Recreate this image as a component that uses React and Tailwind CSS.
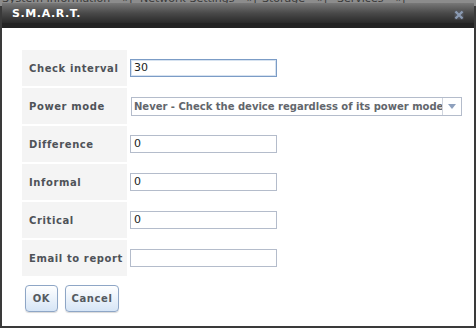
export default function App() {
  const rows = [
    { label: 'Check interval', value: '30', focus: true },
    { label: 'Power mode', select: 'Never - Check the device regardless of its power mode' },
    { label: 'Difference', value: '0' },
    { label: 'Informal', value: '0' },
    { label: 'Critical', value: '0' },
    { label: 'Email to report', value: '' },
  ];

  const tabs = [
    { name: 'System Information', w: 'w-[138px]' },
    { name: 'Network Settings', w: 'w-[122px]' },
    { name: 'Storage', w: 'w-[75px]' },
    { name: 'Services', w: 'w-[80px]' },
  ];

  return (
    <div
      className="relative w-[476px] h-[328px] overflow-hidden bg-[#3a3a3a]"
      style={{ fontFamily: '"DejaVu Sans", Verdana, sans-serif' }}
    >
      {/* page behind the dialog: tab strip */}
      <div className="h-[6px] bg-[#8c8c8c] overflow-hidden">
        <div className="flex pl-[2px] -mt-[7px] text-[11px] leading-[11px] text-[#3a3a3a] whitespace-nowrap">
          {tabs.map((t) => (
            <div key={t.name} className={t.w + ' shrink-0 flex'}>
              <span>{t.name}</span>
              <span className="ml-[12px]">»|</span>
            </div>
          ))}
        </div>
      </div>

      {/* dialog */}
      <div className="absolute left-[2px] top-[3px] right-[2px] bottom-[2px] flex flex-col bg-white">
        <div className="h-[25px] flex items-center justify-between bg-gradient-to-b from-[#787878] via-[#4a4a4a] to-[#2a2a2a] border-b-[5px] border-[#232323] pl-[10px] pr-[10px]">
          <span className="text-white font-bold text-[11px] tracking-[0.6px] mt-[3px]">S.M.A.R.T.</span>
          <svg width="10" height="10" viewBox="0 0 10 10" className="mt-[3px]">
            <rect x="0.5" y="0.5" width="9" height="9" fill="#5b6270" opacity="0.5" />
            <path d="M1.5 1.5 L8.5 8.5 M8.5 1.5 L1.5 8.5" stroke="#8a9ab2" strokeWidth="2.4" />
          </svg>
        </div>

        <div className="flex-1 pl-[20px] pt-[22px]">
          <div className="flex flex-col gap-[2px]">
            {rows.map((r) => (
              <div key={r.label} className="flex h-[36px]">
                <div className="w-[105px] shrink-0 bg-[#f4f4f4] flex items-center pl-[7px] text-[10px] font-bold text-[#4e5258] tracking-[0.6px] whitespace-nowrap">
                  {r.label}
                </div>
                <div className="flex items-center pl-[3px]">
                  {r.select ? (
                    <div className="ml-[1px] w-[331px] h-[19px] border border-[#b4bccb] flex bg-white">
                      <div className="flex-1 flex items-center pl-[2px] text-[10px] font-bold text-[#62666c] tracking-[0px] whitespace-nowrap overflow-hidden">
                        {r.select}
                      </div>
                      <div className="w-[19px] shrink-0 border-l border-[#d0d5de] flex items-center justify-center">
                        <svg width="8" height="5" viewBox="0 0 8 5">
                          <path d="M0 0 L8 0 L4 5 Z" fill="#8ea0bd" />
                        </svg>
                      </div>
                    </div>
                  ) : (
                    <div
                      className={
                        'w-[147px] h-[18px] flex items-center pl-[3px] text-[11px] text-[#222] bg-white ' +
                        (r.focus
                          ? 'border border-[#7b9cc6] shadow-[inset_0_0_0_1px_#d6e2f0]'
                          : 'border border-[#b4bccb]')
                      }
                    >
                      {r.value}
                    </div>
                  )}
                </div>
              </div>
            ))}
          </div>

          <div className="flex gap-[7px] pl-[3px] mt-[9px]">
            <button className="w-[33px] h-[27px] rounded-[4px] border border-[#8ea6c6] bg-gradient-to-b from-white to-[#d6e5f6] text-[10px] font-bold text-[#555a60] tracking-[0.6px] shadow-[0_1px_1px_rgba(0,0,0,0.15)]">
              OK
            </button>
            <button className="w-[54px] h-[27px] rounded-[4px] border border-[#8ea6c6] bg-gradient-to-b from-white to-[#d6e5f6] text-[10px] font-bold text-[#555a60] tracking-[0.6px] shadow-[0_1px_1px_rgba(0,0,0,0.15)]">
              Cancel
            </button>
          </div>
        </div>
      </div>
    </div>
  );
}
